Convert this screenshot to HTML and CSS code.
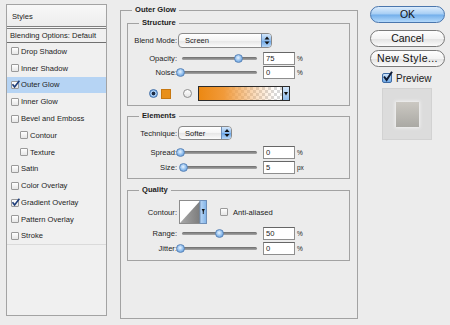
FILE: index.html
```html
<!DOCTYPE html>
<html>
<head>
<meta charset="utf-8">
<link rel="stylesheet" href="styles.css">
</head>
<body>
<div class="dialog">

<div class="styleList">
<div class="listHead">Styles</div>
<div class="listBlend">Blending Options: Default</div>
<div class="item"><span class="check"></span>Drop Shadow</div>
<div class="item"><span class="check"></span>Inner Shadow</div>
<div class="item selected"><span class="check"><svg width="9" height="9" viewBox="0 0 9 9"><path d="M1.5 4.2 L3.6 7 L8.4 0.8" fill="none" stroke="#1b3b78" stroke-width="1.6"/></svg></span>Outer Glow</div>
<div class="item"><span class="check"></span>Inner Glow</div>
<div class="item"><span class="check"></span>Bevel and Emboss</div>
<div class="item sub"><span class="check"></span>Contour</div>
<div class="item sub"><span class="check"></span>Texture</div>
<div class="item"><span class="check"></span>Satin</div>
<div class="item"><span class="check"></span>Color Overlay</div>
<div class="item"><span class="check"><svg width="9" height="9" viewBox="0 0 9 9"><path d="M1.5 4.2 L3.6 7 L8.4 0.8" fill="none" stroke="#1b3b78" stroke-width="1.6"/></svg></span>Gradient Overlay</div>
<div class="item"><span class="check"></span>Pattern Overlay</div>
<div class="item last"><span class="check"></span>Stroke</div>
</div>

<fieldset class="group outer">
<legend>Outer Glow</legend>

<fieldset class="group structure">
<legend>Structure</legend>
<div class="row blendRow">
<span class="lbl">Blend Mode:</span>
<div class="popup blendPopup"><span class="popText">Screen</span><span class="stepper"><svg width="8" height="13" viewBox="0 0 8 13"><polygon points="4,2.5 6.5,5.5 1.5,5.5" fill="#111"/><polygon points="1.5,7.5 6.5,7.5 4,10.5" fill="#111"/></svg></span></div>
</div>
<div class="row slideRow gapOpacity">
<span class="lbl">Opacity:</span>
<div class="slider"><div class="track"></div><div class="thumb" style="left: 56px"></div></div>
<div class="field">75</div><span class="unit">%</span>
</div>
<div class="row slideRow">
<span class="lbl">Noise:</span>
<div class="slider"><div class="track"></div><div class="thumb" style="left: -2.5px"></div></div>
<div class="field">0</div><span class="unit">%</span>
</div>
<div class="row colorRow">
<span class="radio on"></span>
<span class="swatch"></span>
<span class="radio off"></span>
<div class="gradientBar"><div class="gradFill"></div><div class="gradArrow"><svg width="6" height="13" viewBox="0 0 6 13"><polygon points="1,5 5,5 3,8.5" fill="#111"/></svg></div></div>
</div>
</fieldset>

<fieldset class="group elements">
<legend>Elements</legend>
<div class="row techRow">
<span class="lbl">Technique:</span>
<div class="popup techPopup"><span class="popText">Softer</span><span class="stepper"><svg width="8" height="12" viewBox="0 0 8 12"><polygon points="4,2 6.5,5 1.5,5" fill="#111"/><polygon points="1.5,7 6.5,7 4,10" fill="#111"/></svg></span></div>
</div>
<div class="row slideRow gapSpread">
<span class="lbl">Spread:</span>
<div class="slider"><div class="track"></div><div class="thumb" style="left: -2.5px"></div></div>
<div class="field">0</div><span class="unit">%</span>
</div>
<div class="row slideRow gapSize">
<span class="lbl">Size:</span>
<div class="slider"><div class="track"></div><div class="thumb" style="left: 1.4px"></div></div>
<div class="field">5</div><span class="unit">px</span>
</div>
</fieldset>

<fieldset class="group quality">
<legend>Quality</legend>
<div class="row contourRow">
<span class="lbl">Contour:</span>
<div class="contourPick"><svg width="28" height="24" viewBox="0 0 28 24">
<defs>
<linearGradient id="tri" x1="0" y1="0" x2="1" y2="0"><stop offset="0" stop-color="#a9a9a9"/><stop offset="1" stop-color="#7c7c7c"/></linearGradient>
<linearGradient id="strip" x1="0" y1="0" x2="1" y2="0"><stop offset="0" stop-color="#bcd8f6"/><stop offset="1" stop-color="#80b3e8"/></linearGradient>
</defs>
<rect x="0.5" y="0.5" width="27" height="23" fill="#ffffff" stroke="#8c8c8c"/>
<polygon points="1,23 21,1 21,23" fill="url(#tri)"/>
<rect x="21" y="0.5" width="6.5" height="23" fill="url(#strip)" stroke="#6f8fb8"/>
<polygon points="22.6,9 25.9,9 24.25,12" fill="#111"/>
<rect x="23.8" y="11" width="0.9" height="3" fill="#111"/>
</svg></div>
<span class="check antiCheck"></span><span class="antiText">Anti-aliased</span>
</div>
<div class="row slideRow gapRange">
<span class="lbl">Range:</span>
<div class="slider"><div class="track"></div><div class="thumb" style="left: 36.5px"></div></div>
<div class="field">50</div><span class="unit">%</span>
</div>
<div class="row slideRow gapJitter">
<span class="lbl">Jitter:</span>
<div class="slider"><div class="track"></div><div class="thumb" style="left: -2.5px"></div></div>
<div class="field">0</div><span class="unit">%</span>
</div>
</fieldset>

</fieldset>

<div class="buttons">
<div class="btn ok">OK</div>
<div class="btn cancel">Cancel</div>
<div class="btn newStyle">New Style...</div>
<div class="previewRow"><span class="bigCheck"><svg width="11" height="11" viewBox="0 0 11 11"><path d="M2 5.5 L4.6 9 L10 0.8" fill="none" stroke="#0e1a33" stroke-width="2"/></svg></span>Preview</div>
<div class="thumbBox"><div class="thumbInner"></div></div>
</div>

</div>
</body>
</html>
```

FILE: styles.css
```css
body {
	margin: 0;
	background-color: #ececec;
	color: #1c1c1c;
	font-family: "Liberation Sans", Arial, sans-serif;
	font-size: 7.6px;
}

.dialog {
	display: flex;
	align-items: flex-start;
	padding: 4px 0 0 6px;
}

/* left list */

.styleList {
	width: 101px;
	height: 312px;
	box-sizing: border-box;
	border: 1px solid #a3a3a3;
	background-color: #f0f0f0;
	flex: none;
}

.listHead {
	height: 21px;
	line-height: 23px;
	padding-left: 5px;
	border-bottom: 3px double #808080;
	background: linear-gradient(#f8f8f8, #ededed);
}

.listBlend {
	height: 14px;
	line-height: 14px;
	padding-left: 3px;
	box-sizing: border-box;
	border-bottom: 1px solid #707070;
}

.item {
	display: flex;
	align-items: center;
	height: 16.8px;
	padding-left: 4px;
	box-sizing: border-box;
}

.item.sub {
	padding-left: 13px;
}

.item.selected {
	background-color: #b6d4f4;
}

.item.last {
	border-bottom: 1px solid #dadada;
}

.check {
	position: relative;
	width: 8px;
	height: 8px;
	box-sizing: border-box;
	border: 1px solid #9a9a9a;
	border-radius: 1px;
	background: linear-gradient(#ffffff, #e6e6e6);
	margin-right: 2px;
	flex: none;
}

.check svg {
	position: absolute;
	left: -1px;
	top: -2px;
}

/* fieldsets */

.group {
	margin: 0;
	min-width: 0;
	box-sizing: border-box;
	border: 1px solid #a2a2a2;
}

.group legend {
	padding: 0 3px;
	font-weight: bold;
	line-height: 12px;
}

.outer {
	margin-left: 13px;
	width: 238px;
	height: 315px;
	padding: 1px 7px 0 6px;
	flex: none;
}

.outer > legend {
	margin-left: 5px;
}

.structure,
.elements,
.quality {
	padding: 4px 0 4px 0;
}

.structure > legend,
.elements > legend,
.quality > legend {
	margin-left: 11px;
}

.elements {
	margin-top: 4px;
}

.quality {
	margin-top: 5px;
	padding-bottom: 5px;
}

.row {
	display: flex;
	align-items: center;
}

.lbl {
	width: 50px;
	flex: none;
	text-align: right;
	padding-right: 1px;
	box-sizing: border-box;
}

.slideRow {
	height: 14px;
}

.gapOpacity {
	margin-top: 3px;
}

.gapSpread {
	margin-top: 5px;
}

.gapSize {
	margin-top: 1px;
}

.gapRange {
	margin-top: 2px;
}

.gapJitter {
	margin-top: 1px;
}

/* popup menus */

.popup {
	display: flex;
	box-sizing: border-box;
	border: 1px solid #8a8a8a;
	border-radius: 4px;
	background: linear-gradient(#ffffff, #f4f4f4 50%, #e6e6e6 52%, #fbfbfb);
	overflow: hidden;
}

.popText {
	padding-left: 6px;
	align-self: center;
}

.stepper {
	margin-left: auto;
	width: 9px;
	border-left: 1px solid #6f8fb8;
	background: linear-gradient(#d2e6fb, #8fbdee 50%, #6aa5e6 52%, #b6d7f8);
	display: flex;
	align-items: center;
	justify-content: center;
}

.blendPopup {
	width: 94px;
	height: 15px;
}

.techPopup {
	width: 54px;
	height: 14px;
}

/* sliders */

.slider {
	position: relative;
	width: 80px;
	height: 14px;
	flex: none;
}

.track {
	position: absolute;
	left: 4px;
	right: 1px;
	top: 6px;
	height: 3px;
	border-radius: 2px;
	background: linear-gradient(#6c6c6c, #a8a8a8);
}

.thumb {
	position: absolute;
	top: 2.5px;
	width: 9px;
	height: 9px;
	box-sizing: border-box;
	border-radius: 50%;
	border: 1px solid #5c86b9;
	background: radial-gradient(circle at 45% 40%, #eaf4ff, #93c0ee 50%, #4f8ad0);
}

.field {
	margin-left: 5px;
	width: 32px;
	height: 13px;
	box-sizing: border-box;
	border: 1px solid #8e8e8e;
	border-top-color: #666;
	background-color: #fff;
	padding-left: 2px;
	line-height: 11px;
	flex: none;
}

.unit {
	margin-left: 2px;
	font-size: 6.5px;
}

/* color row */

.colorRow {
	margin-top: 7px;
	height: 15px;
}

.radio {
	width: 9px;
	height: 9px;
	box-sizing: border-box;
	border-radius: 50%;
	flex: none;
}

.radio.on {
	margin-left: 21px;
	border: 1px solid #3f6ea8;
	background: radial-gradient(circle, #1a2a44 0 1.6px, #a9cdf3 2.2px, #5d98dc);
}

.radio.off {
	margin-left: 12px;
	border: 1px solid #8e8e8e;
	background: linear-gradient(#ffffff, #e4e4e4);
}

.swatch {
	margin-left: 3px;
	width: 10px;
	height: 10px;
	background-color: #e8901c;
	box-shadow: inset 0 0 0 1px #c77812;
	flex: none;
}

.gradientBar {
	display: flex;
	margin-left: 6px;
	width: 92px;
	height: 15px;
	box-sizing: border-box;
	border: 1px solid #2c2c2c;
}

.gradFill {
	flex: 1;
	background:
		linear-gradient(to right, #ec8812 0%, #f19a3a 30%, rgba(244, 168, 90, 0.45) 65%, rgba(255, 255, 255, 0) 92%),
		repeating-conic-gradient(#d9d9d9 0 25%, #ffffff 0 50%) 0 0 / 6px 6px;
}

.gradArrow {
	width: 6px;
	border-left: 1px solid #2c2c2c;
	background: linear-gradient(#d4e7fb, #8fbdee);
	display: flex;
	align-items: center;
}

/* quality */

.contourRow {
	height: 24px;
}

.contourPick {
	margin-left: 1px;
	width: 28px;
	height: 24px;
	flex: none;
}

.contourPick svg {
	display: block;
}

.antiCheck {
	margin-left: 13px;
	margin-right: 0;
}

.antiText {
	margin-left: 5px;
}

/* right column */

.buttons {
	margin-left: 12px;
	width: 75px;
	flex: none;
}

.btn {
	height: 17px;
	box-sizing: border-box;
	border: 1px solid #7a7a7a;
	border-radius: 9px;
	background: linear-gradient(#fefefe, #f3f3f3 50%, #e2e2e2 52%, #fbfbfb);
	text-align: center;
	line-height: 15px;
	font-size: 10.5px;
	color: #111;
}

.btn.ok {
	margin-top: 2px;
	border-color: #4a76ad;
	background: linear-gradient(#dcecfc, #a5cdf4 48%, #72aeea 52%, #b3d9fb);
}

.btn.cancel {
	margin-top: 7px;
}

.btn.newStyle {
	margin-top: 3px;
	letter-spacing: 0.4px;
}

.previewRow {
	display: flex;
	align-items: center;
	margin-top: 4px;
	height: 14px;
	font-size: 10px;
	padding-left: 12px;
}

.bigCheck {
	position: relative;
	width: 10px;
	height: 10px;
	box-sizing: border-box;
	border: 1px solid #3d6aa3;
	border-radius: 2px;
	background: linear-gradient(#cfe4fa, #6fa8e6);
	margin-right: 4px;
	flex: none;
}

.bigCheck svg {
	position: absolute;
	left: -1px;
	top: -3px;
}

.thumbBox {
	margin: 3px 0 0 12px;
	width: 50px;
	height: 52px;
	box-sizing: border-box;
	border: 1px solid #d2d2d2;
	background-color: #dcdcdc;
	display: flex;
	align-items: center;
	justify-content: center;
}

.thumbInner {
	width: 23px;
	height: 25px;
	background: linear-gradient(#cbc8c2, #aaa9a4);
	box-shadow: 0 0 3px 1px #f2f2f2;
}
```
